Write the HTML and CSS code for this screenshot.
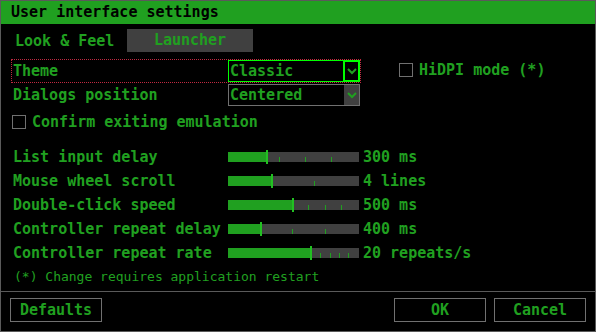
FILE: index.html
```html
<!DOCTYPE html>
<html lang="en">
<head>
  <meta charset="UTF-8">
  <title>User interface settings</title>
  <link rel="stylesheet" href="styles.css">
</head>
<body>
  <div class="window">
    <div class="titlebar">User interface settings</div>

    <div class="content">
      <div class="tabs">
        <span class="tab">Look &amp; Feel</span>
        <span class="tab tab-active">Launcher</span>
      </div>

      <div class="line">
        <div class="row row-focus">
          <span class="label">Theme</span>
          <div class="dropdown dropdown-focus">
            <span class="dd-text">Classic</span>
            <span class="dd-arrow"><svg width="10" height="7" viewBox="0 0 10 7"><path d="M1 1 L5 5 L9 1" fill="none" stroke="#20a020" stroke-width="2"/></svg></span>
          </div>
        </div>
        <label class="check check-hidpi"><span class="box"></span>HiDPI mode (*)</label>
      </div>

      <div class="row row-second">
        <span class="label">Dialogs position</span>
        <div class="dropdown">
          <span class="dd-text">Centered</span>
          <span class="dd-arrow"><svg width="10" height="7" viewBox="0 0 10 7"><path d="M1 1 L5 5 L9 1" fill="none" stroke="#20a020" stroke-width="2"/></svg></span>
        </div>
      </div>

      <div class="row row-check">
        <label class="check"><span class="box"></span>Confirm exiting emulation</label>
      </div>

      <div class="sliders">
        <div class="srow">
          <span class="label">List input delay</span>
          <div class="track">
            <div class="fill" style="width: 39px"></div>
            <i class="tick" style="left: 25px"></i><i class="tick" style="left: 51px"></i><i class="tick" style="left: 77px"></i><i class="tick" style="left: 103px"></i>
            <b class="thumb" style="left: 38px"></b>
          </div>
          <span class="value">300 ms</span>
        </div>
        <div class="srow">
          <span class="label">Mouse wheel scroll</span>
          <div class="track">
            <div class="fill" style="width: 44px"></div>
            <i class="tick" style="left: 42px"></i><i class="tick" style="left: 86px"></i>
            <b class="thumb" style="left: 43px"></b>
          </div>
          <span class="value">4 lines</span>
        </div>
        <div class="srow">
          <span class="label">Double-click speed</span>
          <div class="track">
            <div class="fill" style="width: 65px"></div>
            <i class="tick" style="left: 15px"></i><i class="tick" style="left: 31px"></i><i class="tick" style="left: 48px"></i><i class="tick" style="left: 80px"></i><i class="tick" style="left: 97px"></i><i class="tick" style="left: 113px"></i>
            <b class="thumb" style="left: 64px"></b>
          </div>
          <span class="value">500 ms</span>
        </div>
        <div class="srow">
          <span class="label">Controller repeat delay</span>
          <div class="track">
            <div class="fill" style="width: 33px"></div>
            <i class="tick" style="left: 64px"></i><i class="tick" style="left: 97px"></i>
            <b class="thumb" style="left: 32px"></b>
          </div>
          <span class="value">400 ms</span>
        </div>
        <div class="srow">
          <span class="label">Controller repeat rate</span>
          <div class="track">
            <div class="fill" style="width: 83px"></div>
            <i class="tick" style="left: 8px"></i><i class="tick" style="left: 17px"></i><i class="tick" style="left: 27px"></i><i class="tick" style="left: 36px"></i><i class="tick" style="left: 46px"></i><i class="tick" style="left: 55px"></i><i class="tick" style="left: 65px"></i><i class="tick" style="left: 74px"></i><i class="tick" style="left: 92px"></i><i class="tick" style="left: 102px"></i><i class="tick" style="left: 111px"></i><i class="tick" style="left: 120px"></i>
            <b class="thumb" style="left: 82px"></b>
          </div>
          <span class="value">20 repeats/s</span>
        </div>
      </div>

      <div class="note">(*) Change requires application restart</div>
    </div>

    <div class="footer">
      <button class="btn">Defaults</button>
      <span class="spacer"></span>
      <button class="btn">OK</button>
      <button class="btn">Cancel</button>
    </div>
  </div>
</body>
</html>
```

FILE: styles.css
```css
body {
  margin: 0;
  padding: 0;
  background-color: #000;
  font-family: "DejaVu Sans Mono", "Liberation Mono", monospace;
  font-size: 15px;
  font-weight: bold;
  color: #20a020;
}
.window {
  width: 594px;
  height: 330px;
  border: 1px solid #5a5a5a;
  display: flex;
  flex-direction: column;
  background-color: #000;
}
.titlebar {
  height: 23px;
  line-height: 23px;
  background-color: #20a020;
  color: #000;
  padding-left: 10px;
}
.content {
  flex: 1;
  padding-left: 11px;
}
.tabs {
  display: flex;
  align-items: center;
  margin-top: 5px;
  height: 23px;
}
.tab {
  padding-left: 3px;
  width: 112px;
}
.tab-active {
  width: 126px;
  height: 23px;
  line-height: 23px;
  padding: 0;
  text-align: center;
  background-color: #404040;
}
.line {
  display: flex;
  align-items: center;
  margin-top: 8px;
}
.row {
  display: flex;
  align-items: center;
  height: 22px;
}
.row-focus {
  width: 348px;
  outline: 1px dotted #c02840;
}
.row-second {
  margin-top: 2px;
}
.row-check {
  margin-top: 4px;
  height: 24px;
}
.label {
  width: 215px;
  padding-left: 1px;
  flex-shrink: 0;
}
.dropdown {
  width: 130px;
  height: 20px;
  border: 1px solid #707070;
  display: flex;
  flex-shrink: 0;
}
.dd-text {
  flex: 1;
  line-height: 20px;
  padding-left: 1px;
}
.dd-arrow {
  width: 15px;
  background-color: #404040;
  display: flex;
  align-items: center;
  justify-content: center;
}
.dropdown-focus {
  border-color: #00ff00;
}
.dropdown-focus .dd-arrow {
  background-color: #000;
  border: 2px solid #00ff00;
  margin: -1px -1px -1px 0;
  width: 13px;
}
.check {
  display: flex;
  align-items: center;
  gap: 6px;
}
.check-hidpi {
  margin-left: 39px;
  margin-top: -2px;
}
.box {
  width: 12px;
  height: 12px;
  border: 1px solid #707070;
}
.sliders {
  margin-top: 11px;
}
.srow {
  display: flex;
  align-items: center;
  height: 24px;
}
.track {
  position: relative;
  width: 131px;
  height: 10px;
  background-color: #404040;
  flex-shrink: 0;
}
.fill {
  height: 10px;
  background-color: #20a020;
}
.tick {
  position: absolute;
  bottom: 0;
  width: 1px;
  height: 5px;
  background-color: #20a020;
  z-index: 1;
}
.thumb {
  position: absolute;
  top: -2px;
  width: 2px;
  height: 14px;
  background-color: #22c022;
  z-index: 2;
}
.value {
  margin-left: 4px;
}
.note {
  margin-top: 4px;
  font-size: 13px;
  font-weight: normal;
  line-height: 16px;
  padding-left: 2px;
}
.footer {
  border-top: 1px solid #5a5a5a;
  padding: 6px 9px 9px 9px;
  display: flex;
  gap: 8px;
}
.spacer {
  flex: 1;
}
.btn {
  width: 92px;
  height: 24px;
  background-color: #000;
  border: 1px solid #707070;
  color: #20a020;
  font-family: "DejaVu Sans Mono", "Liberation Mono", monospace;
  font-size: 15px;
  font-weight: bold;
  padding: 0;
}
```
